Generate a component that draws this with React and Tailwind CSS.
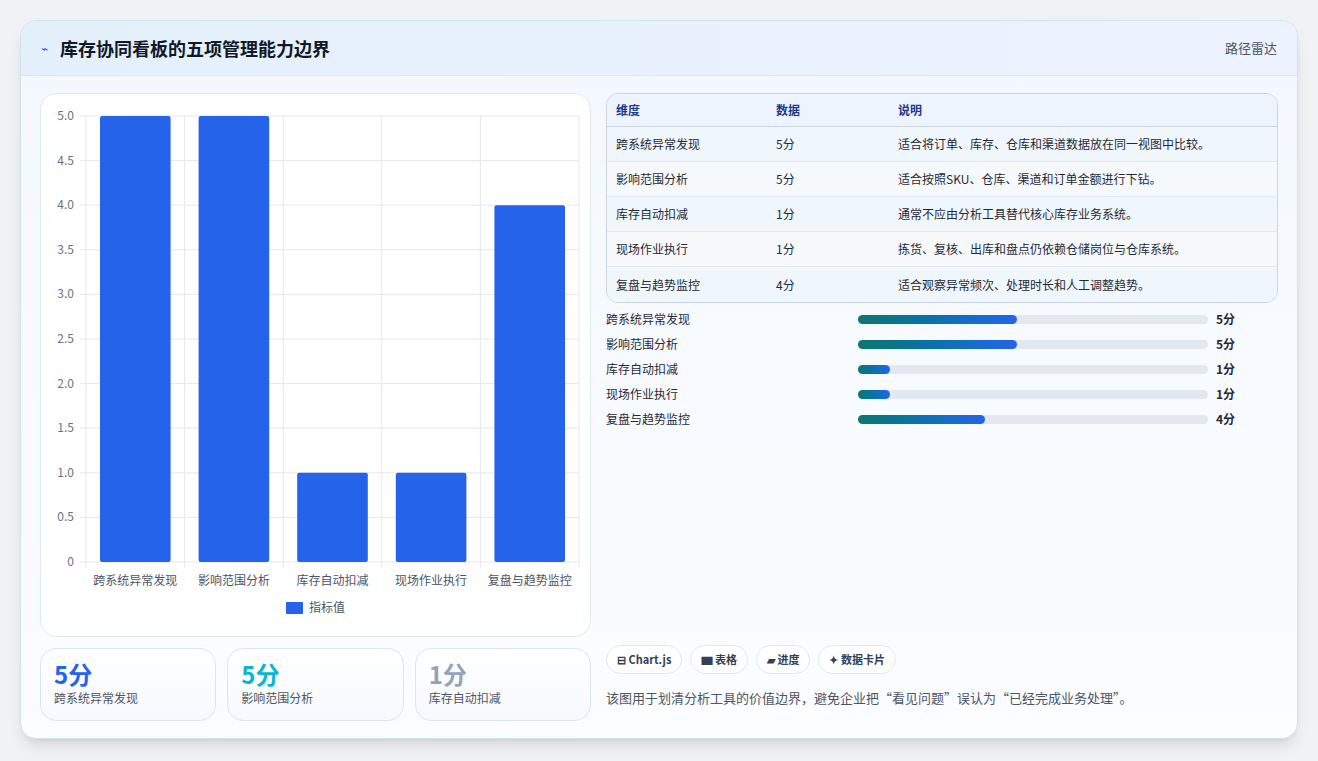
import React from "react";

const rows = [
  { name: "跨系统异常发现", v: 5, d: "适合将订单、库存、仓库和渠道数据放在同一视图中比较。" },
  { name: "影响范围分析", v: 5, d: "适合按照SKU、仓库、渠道和订单金额进行下钻。" },
  { name: "库存自动扣减", v: 1, d: "通常不应由分析工具替代核心库存业务系统。" },
  { name: "现场作业执行", v: 1, d: "拣货、复核、出库和盘点仍依赖仓储岗位与仓库系统。" },
  { name: "复盘与趋势监控", v: 4, d: "适合观察异常频次、处理时长和人工调整趋势。" },
];

const font = { fontFamily: '"Noto Sans CJK SC", "Noto Sans", sans-serif' };

const Chart = () => {
  const x0 = 45, x1 = 538, y0 = 22, y1 = 468;
  const cw = (x1 - x0) / 5;
  const ticks = [0, 0.5, 1, 1.5, 2, 2.5, 3, 3.5, 4, 4.5, 5];
  return (
    <svg width="550" height="543" viewBox="0 0 550 543" style={font}>
      {ticks.map((t) => {
        const y = y1 - (t / 5) * (y1 - y0);
        return (
          <g key={t}>
            <line x1={x0 - 6} x2={x1} y1={y} y2={y} stroke="#e5e7eb" />
            <text x={x0 - 12} y={y + 4} textAnchor="end" fontSize="12" fill="#6b7280">
              {t === 0 ? "0" : t.toFixed(1)}
            </text>
          </g>
        );
      })}
      {[0, 1, 2, 3, 4, 5].map((i) => (
        <line key={i} x1={x0 + i * cw} x2={x0 + i * cw} y1={y0} y2={y1 + 6} stroke="#e5e7eb" />
      ))}
      {rows.map((r, i) => {
        const h = (r.v / 5) * (y1 - y0);
        return (
          <g key={r.name}>
            <rect x={x0 + i * cw + 14} y={y1 - h} width={cw - 28} height={h} rx="2" fill="#2563eb" />
            <text x={x0 + i * cw + cw / 2} y={y1 + 23} textAnchor="middle" fontSize="12" fill="#4b5563">
              {r.name}
            </text>
          </g>
        );
      })}
      <rect x="245" y="508" width="17" height="12" fill="#2563eb" />
      <text x="268" y="518" fontSize="12" fill="#4b5563">指标值</text>
    </svg>
  );
};

export default function App() {
  return (
    <div className="min-h-screen bg-[#f1f2f4] pt-5" style={font}>
      <div className="mx-5 h-[719px] overflow-hidden rounded-2xl border border-[#cfe3f1] bg-gradient-to-b from-[#f3f8fe] to-[#fbfdff] shadow-lg">
        <div className="flex h-[55px] items-center justify-between border-b border-[#d8e8f5] bg-gradient-to-r from-[#e3f0fc] to-[#edf3fe] px-5">
          <div className="flex items-center gap-3">
            <span className="text-xs text-[#2563eb]">⌁</span>
            <h1 className="text-lg font-bold text-[#111827]">库存协同看板的五项管理能力边界</h1>
          </div>
          <span className="text-[13px] text-[#4b5563]">路径雷达</span>
        </div>
        <div className="flex gap-[15px] px-[19px] pt-[17px]">
          <div className="w-[551px] shrink-0">
            <div className="h-[544px] rounded-2xl border border-[#e2e8f0] bg-white">
              <Chart />
            </div>
            <div className="mt-[11px] grid grid-cols-3 gap-[11px]">
              {[["5分", "text-[#2563eb]"], ["5分", "text-[#06b6d4]"], ["1分", "text-[#94a3b8]"]].map(([v, c], i) => (
                <div key={i} className="h-[73px] rounded-2xl border border-[#dbe4f0] bg-gradient-to-b from-white to-[#f6f9fd] px-[13px] pt-[9px]">
                  <div className={`text-2xl font-bold ${c}`}>{v}</div>
                  <div className="text-xs text-[#4b5563]">{rows[i].name}</div>
                </div>
              ))}
            </div>
          </div>
          <div className="flex flex-1 flex-col">
            <div className="overflow-hidden rounded-xl border border-[#cbd5e1]">
              <div className="grid h-[33px] grid-cols-[160px_122px_1fr] items-center border-b border-[#cbd5e1] bg-[#eef4fd] px-[9px] text-xs font-bold text-[#1e3a8a]">
                <span>维度</span><span>数据</span><span>说明</span>
              </div>
              {rows.map((r, i) => (
                <div key={r.name} className={`grid h-[35px] grid-cols-[160px_122px_1fr] items-center px-[9px] text-xs text-[#1f2937] ${i % 2 ? "bg-[#f6f9fc]" : "bg-[#f0f7fc]"} ${i < 4 ? "border-b border-[#e2e8f0]" : ""}`}>
                  <span>{r.name}</span><span>{r.v}分</span><span>{r.d}</span>
                </div>
              ))}
            </div>
            <div className="mt-[8px] flex flex-col gap-[9px]">
              {rows.map((r) => (
                <div key={r.name} className="flex h-4 items-center text-xs text-[#1f2937]">
                  <span className="w-[252px]">{r.name}</span>
                  <div className="h-[9px] w-[350px] rounded-full bg-[#e2e8f0]">
                    <div className="h-full rounded-full bg-gradient-to-r from-[#0f766e] to-[#2563eb]" style={{ width: `${(r.v / 11) * 100}%` }} />
                  </div>
                  <span className="ml-2 font-bold">{r.v}分</span>
                </div>
              ))}
            </div>
            <div className="mt-auto mb-[3px] flex gap-2">
              {["⊟ Chart.js", "▆ 表格", "▰ 进度", "✦ 数据卡片"].map((t) => (
                <span key={t} className="rounded-full border border-[#e2e8f0] bg-white px-[10px] py-[5px] text-[11px] font-bold text-[#334155]">{t}</span>
              ))}
            </div>
            <p className="mt-[11px] mb-[14px] text-[13px] text-[#4b5563]">该图用于划清分析工具的价值边界，避免企业把“看见问题”误认为“已经完成业务处理”。</p>
          </div>
        </div>
      </div>
    </div>
  );
}
